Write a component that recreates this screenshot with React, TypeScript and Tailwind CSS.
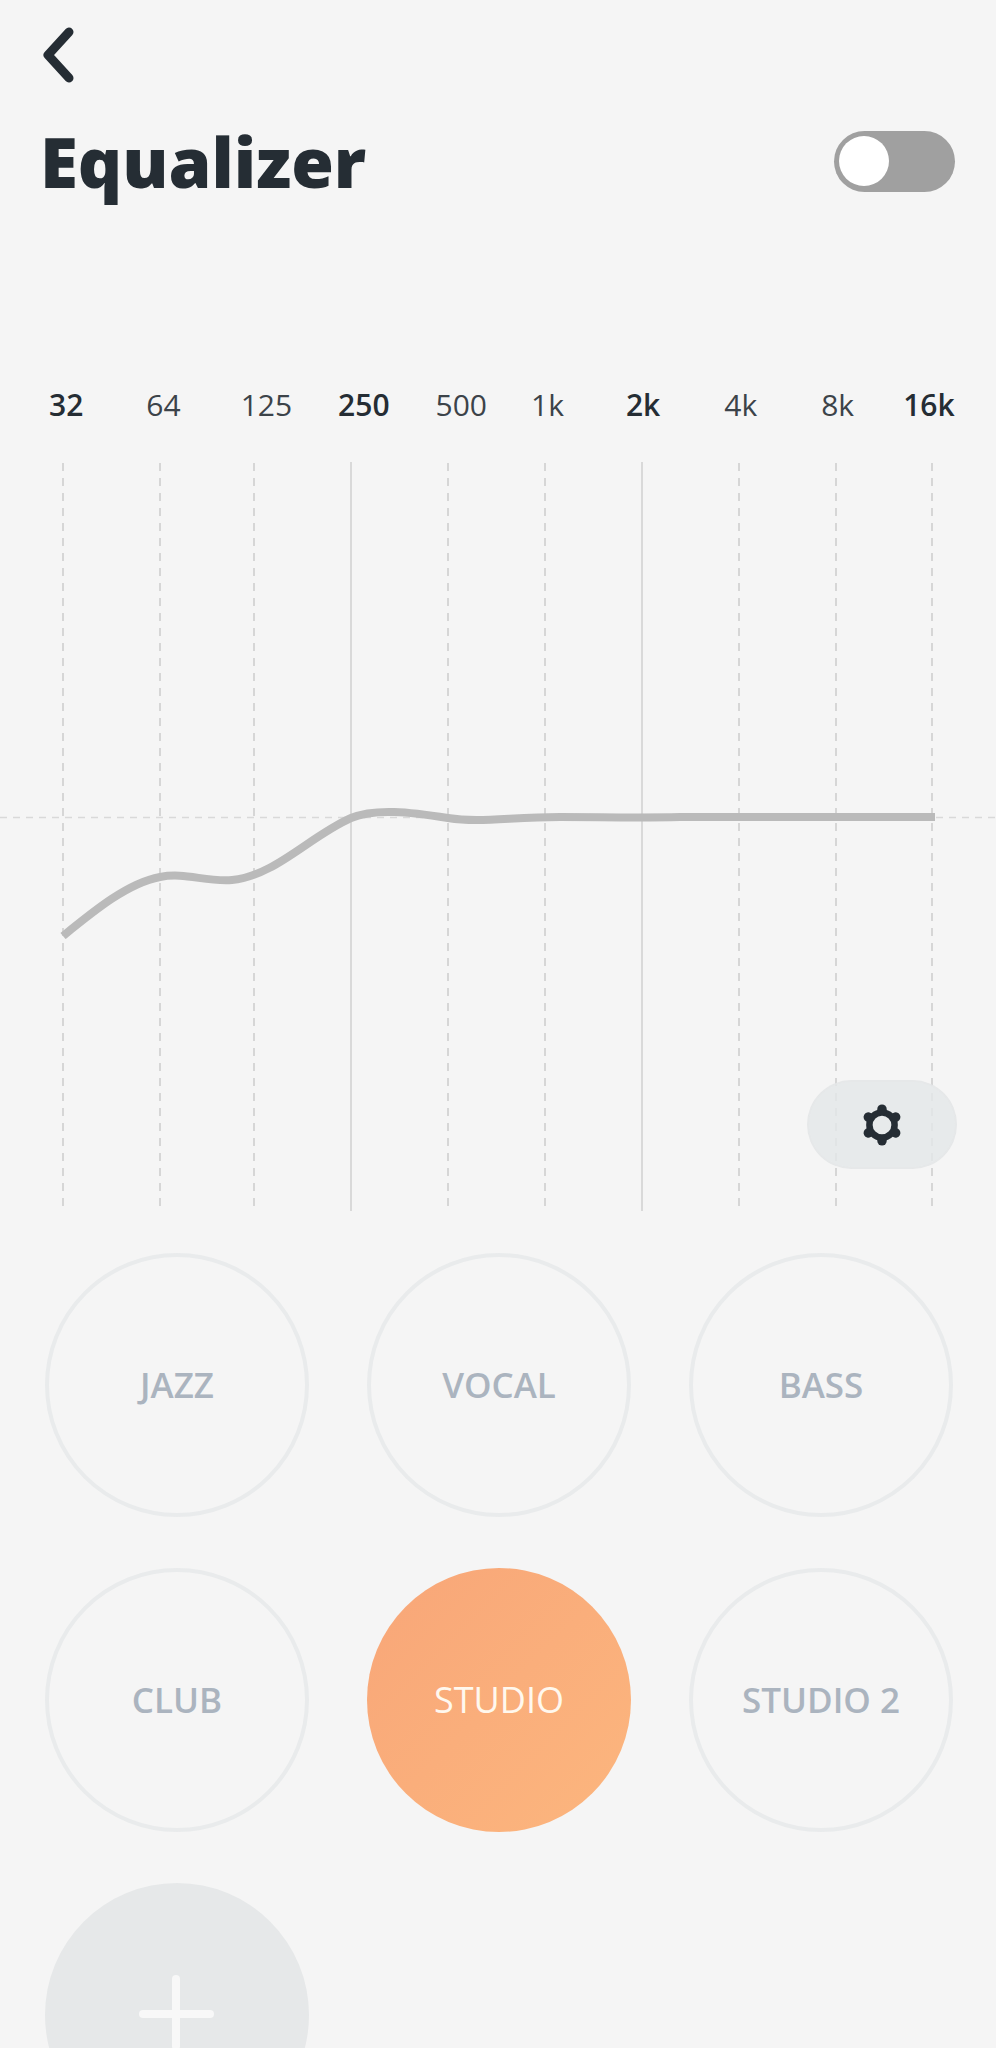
import React from "react";

const bands = [
  { label: "32", bold: true, x: 63, gap: "ml-[49px]" },
  { label: "64", bold: false, x: 160, gap: "ml-[63px]" },
  { label: "125", bold: false, x: 254, gap: "ml-[60px]" },
  { label: "250", bold: true, x: 351, gap: "ml-[46px]" },
  { label: "500", bold: false, x: 448, gap: "ml-[46px]" },
  { label: "1k", bold: false, x: 545, gap: "ml-[44px]" },
  { label: "2k", bold: true, x: 642, gap: "ml-[62px]" },
  { label: "4k", bold: false, x: 739, gap: "ml-[64px]" },
  { label: "8k", bold: false, x: 836, gap: "ml-[64px]" },
  { label: "16k", bold: true, x: 932, gap: "ml-[49px]" },
];

const presets = ["JAZZ", "VOCAL", "BASS", "CLUB", "STUDIO", "STUDIO 2"];

const GearIcon = () => (
  <svg width="42" height="42" viewBox="-21 -21 42 42" fill="none">
    <circle r="12.6" stroke="#252d34" strokeWidth="6.5" />
    {[0, 60, 120, 180, 240, 300].map((deg) => (
      <line
        key={deg}
        x1="0"
        y1="-15.2"
        x2="0"
        y2="-15.8"
        stroke="#252d34"
        strokeWidth="9.5"
        strokeLinecap="round"
        transform={`rotate(${deg})`}
      />
    ))}
  </svg>
);

const Chart = () => (
  <svg width="996" height="750" viewBox="0 462 996 750" className="block">
    {bands.map((b) =>
      b.bold && b.x > 100 && b.x < 900 ? (
        <line key={b.x} x1={b.x} y1="462" x2={b.x} y2="1211" stroke="#d9d9d9" strokeWidth="2" />
      ) : (
        <line
          key={b.x}
          x1={b.x}
          y1="463"
          x2={b.x}
          y2="1206"
          stroke="#d6d6d6"
          strokeWidth="2"
          strokeDasharray="8 7"
        />
      )
    )}
    <line x1="0" y1="817.5" x2="996" y2="817.5" stroke="#d9d9d9" strokeWidth="1.5" strokeDasharray="7 6" />
    <path
      d="M63 936 C 95 910, 128 883, 160 877 C 185 872, 205 882, 232 880 C 275 876, 310 836, 351 818 C 375 808, 410 812, 448 818 C 480 823, 510 817, 560 817 C 600 817, 640 818, 680 817 L 935 817"
      fill="none"
      stroke="#bababa"
      strokeWidth="8"
    />
  </svg>
);

const App = () => {
  return (
    <div className="h-[2048px] overflow-hidden bg-[#f5f5f5] font-['Open_Sans',sans-serif]">
      <div className="pl-[39px] pt-[26px]">
        <svg width="40" height="58" viewBox="0 0 40 58" fill="none">
          <path
            d="M30 6 L9 29 L30 52"
            stroke="#252d34"
            strokeWidth="9"
            strokeLinecap="round"
            strokeLinejoin="round"
          />
        </svg>
      </div>

      <div className="mt-[37px] flex items-center justify-between pl-[40px] pr-[41px]">
        <h1 className="text-[69px] leading-[80px] font-extrabold text-[#252d34]">
          Equalizer
        </h1>
        <div className="flex h-[61px] w-[121px] items-center rounded-full bg-[#a0a0a0] pl-[5px]">
          <div className="h-[50px] w-[50px] rounded-full bg-white" />
        </div>
      </div>

      <div className="mt-[183px] flex h-[42px] items-center text-[30px] leading-[42px] text-[#3c4349]">
        {bands.map((b) => (
          <span
            key={b.label}
            className={`${b.gap} ${b.bold ? "font-semibold text-[#252d34]" : ""}`}
          >
            {b.label}
          </span>
        ))}
      </div>

      <div className="relative mt-[36px]">
        <Chart />
        <button className="absolute top-[618px] left-[807px] flex h-[89px] w-[150px] items-center justify-center rounded-full border-2 border-[#e4e6e7]/60 bg-[#e4e7e8]/80">
          <GearIcon />
        </button>
      </div>

      <div className="mt-[41px] grid grid-cols-[repeat(3,264px)] gap-x-[58px] gap-y-[51px] pl-[45px]">
        {presets.map((name) =>
          name === "STUDIO" ? (
            <div
              key={name}
              className="flex h-[264px] items-center justify-center rounded-full bg-gradient-to-br from-[#f8a678] to-[#fcb67e] text-[36px] font-medium text-[#fff8ee]"
            >
              {name}
            </div>
          ) : (
            <div
              key={name}
              className="flex h-[264px] items-center justify-center rounded-full border-[4px] border-[#e9ebec] text-[35px] font-semibold text-[#abb4bf]"
            >
              {name}
            </div>
          )
        )}
        <div className="relative h-[264px] rounded-full bg-[#e6e8e9]">
          <div className="absolute top-[92px] left-[127px] h-[75px] w-[8px] rounded-full bg-[#f8f8f8]" />
          <div className="absolute top-[127px] left-[94px] h-[8px] w-[75px] rounded-full bg-[#f8f8f8]" />
        </div>
      </div>
    </div>
  );
};

export default App;
